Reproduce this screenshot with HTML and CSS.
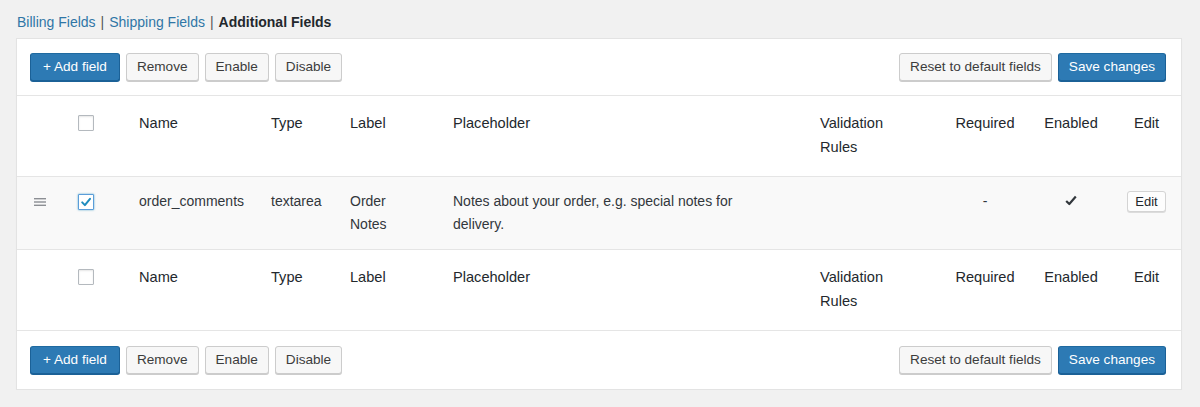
FILE: index.html
```html
<!DOCTYPE html>
<html lang="en">
<head>
<meta charset="utf-8">
<title>Checkout Fields</title>
<link rel="stylesheet" href="styles.css">
</head>
<body>
<nav class="subtabs">
  <a href="#" class="subtab-link">Billing Fields</a><span class="sep">|</span><a href="#" class="subtab-link">Shipping Fields</a><span class="sep">|</span><span class="subtab-current">Additional Fields</span>
</nav>
<section class="panel">
  <div class="toolbar toolbar-top">
    <div class="btn-group">
      <button class="btn btn-primary btn-add">+ Add field</button>
      <button class="btn">Remove</button>
      <button class="btn">Enable</button>
      <button class="btn">Disable</button>
    </div>
    <div class="btn-group">
      <button class="btn">Reset to default fields</button>
      <button class="btn btn-primary">Save changes</button>
    </div>
  </div>
  <table class="fields">
    <colgroup>
      <col class="c-handle"><col class="c-check"><col class="c-name"><col class="c-type"><col class="c-label"><col class="c-ph"><col class="c-valid"><col class="c-req"><col class="c-en"><col class="c-edit">
    </colgroup>
    <thead>
      <tr class="head-row">
        <th></th>
        <th class="col-check"><span class="cb"></span></th>
        <th>Name</th>
        <th>Type</th>
        <th>Label</th>
        <th class="pad-r">Placeholder</th>
        <th class="valid">Validation Rules</th>
        <th class="center">Required</th>
        <th class="center">Enabled</th>
        <th class="center">Edit</th>
      </tr>
    </thead>
    <tbody>
      <tr class="data-row">
        <td class="col-handle"><svg class="handle" width="12" height="8" viewBox="0 0 12 8"><rect x="0" y="0" width="12" height="1.4" fill="#8c8f94"/><rect x="0" y="3.3" width="12" height="1.4" fill="#8c8f94"/><rect x="0" y="6.6" width="12" height="1.4" fill="#8c8f94"/></svg></td>
        <td class="col-check"><span class="cb cb-checked"><svg width="14" height="14" viewBox="0 0 14 14"><path d="M3.2 7.4 L5.9 10.1 L11 3.8" fill="none" stroke="#1e8cbe" stroke-width="2" stroke-linecap="round" stroke-linejoin="round"/></svg></span></td>
        <td>order_comments</td>
        <td>textarea</td>
        <td class="pad-r">Order Notes</td>
        <td class="pad-r">Notes about your order, e.g. special notes for delivery.</td>
        <td></td>
        <td class="center">-</td>
        <td class="center"><svg class="tick" width="12" height="11" viewBox="0 0 12 11"><path d="M1.2 6 L4.3 9 L10.8 1.6" fill="none" stroke="#32373c" stroke-width="2.2" stroke-linejoin="round"/></svg></td>
        <td class="center"><button class="btn-small">Edit</button></td>
      </tr>
    </tbody>
    <tfoot>
      <tr class="head-row">
        <th></th>
        <th class="col-check"><span class="cb"></span></th>
        <th>Name</th>
        <th>Type</th>
        <th>Label</th>
        <th class="pad-r">Placeholder</th>
        <th class="valid">Validation Rules</th>
        <th class="center">Required</th>
        <th class="center">Enabled</th>
        <th class="center">Edit</th>
      </tr>
    </tfoot>
  </table>
  <div class="toolbar toolbar-bottom">
    <div class="btn-group">
      <button class="btn btn-primary btn-add">+ Add field</button>
      <button class="btn">Remove</button>
      <button class="btn">Enable</button>
      <button class="btn">Disable</button>
    </div>
    <div class="btn-group">
      <button class="btn">Reset to default fields</button>
      <button class="btn btn-primary">Save changes</button>
    </div>
  </div>
</section>
</body>
</html>
```
FILE: styles.css
```css
* { box-sizing: border-box; }

html, body {
  margin: 0;
  padding: 0;
  background: #f1f1f1;
}

body {
  font-family: "Liberation Sans", Arial, sans-serif;
  color: #32373c;
  font-size: 13px;
}

.subtabs {
  padding: 13px 0 0 17px;
  height: 38px;
  font-size: 14px;
  line-height: 18px;
}

.subtab-link {
  color: #2f76a6;
  text-decoration: none;
}

.sep {
  color: #555;
  padding: 0 5px;
}

.subtab-current {
  color: #23282d;
  font-weight: bold;
}

.panel {
  margin: 0 18px 0 16px;
  background: #fff;
  border: 1px solid #e3e3e3;
  box-shadow: 0 1px 1px rgba(0,0,0,0.04);
}

.toolbar {
  display: flex;
  justify-content: space-between;
  align-items: center;
  padding: 14px 15px 14px 13px;
}

.toolbar-top {
  border-bottom: 1px solid #e5e5e5;
}

.toolbar-bottom {
  padding-top: 15px;
  padding-bottom: 15px;
}

.btn-group {
  display: flex;
  gap: 6px;
}

.btn {
  font-family: inherit;
  font-size: 13.6px;
  height: 28px;
  line-height: 26px;
  padding: 0 10px 1px;
  color: #3c3c3c;
  background: #f7f7f7;
  border: 1px solid #cccccc;
  border-radius: 3px;
  box-shadow: 0 1px 0 #cccccc;
  cursor: pointer;
  white-space: nowrap;
}

.btn-primary {
  color: #fff;
  background: #2d7ab4;
  border-color: #1f6aa0 #1b6197 #1b6197;
  box-shadow: 0 1px 0 #1b6197;
}

.btn-add {
  padding: 0 12px 1px;
}

.fields {
  width: 100%;
  border-collapse: collapse;
  table-layout: fixed;
}

.c-handle { width: 45px; }
.c-check { width: 67px; }
.c-name { width: 132px; }
.c-type { width: 79px; }
.c-label { width: 103px; }
.c-ph { width: 367px; }
.c-valid { width: 130px; }
.c-req { width: 90px; }
.c-en { width: 82px; }
.c-edit { width: 69px; }

.fields th {
  font-weight: normal;
  text-align: left;
  vertical-align: top;
  font-size: 14.6px;
  line-height: 24px;
  color: #23282d;
  padding: 15px 10px 17px;
}

.fields td {
  vertical-align: top;
  font-size: 14px;
  line-height: 23px;
  color: #32373c;
  padding: 13px 10px 13px;
}

.fields th.center,
.fields td.center {
  text-align: center;
}

.fields .pad-r {
  padding-right: 30px;
}

.fields th.valid {
  padding-right: 30px;
}

.head-row {
  background: #fff;
}

tfoot .head-row {
  border-top: 1px solid #e5e5e5;
  border-bottom: 1px solid #e5e5e5;
}

.data-row {
  background: #f9f9f9;
  border-top: 1px solid #e5e5e5;
}

.fields .col-check {
  padding-left: 16px;
}

.fields .col-handle {
  text-align: center;
}

.handle {
  display: inline-block;
  margin-top: 8px;
}

.cb {
  display: block;
  width: 16px;
  height: 16px;
  margin-top: 4px;
  border: 1px solid #b4b9be;
  border-radius: 1px;
  background: #fff;
  box-shadow: inset 0 1px 2px rgba(0,0,0,0.1);
}

.cb-checked {
  border-color: #5b9dd9;
  box-shadow: 0 0 2px rgba(30,140,190,0.8);
}

.cb-checked svg {
  display: block;
}

.tick {
  display: inline-block;
  margin-top: 4px;
}

.btn-small {
  font-family: inherit;
  font-size: 13px;
  height: 21px;
  line-height: 19px;
  padding: 0 7px;
  margin-top: 0;
  color: #23282d;
  background: #fdfdfd;
  border: 1px solid #d4d4d4;
  border-radius: 3px;
  box-shadow: 0 1px 0 #dcdcdc;
  cursor: pointer;
}
```
